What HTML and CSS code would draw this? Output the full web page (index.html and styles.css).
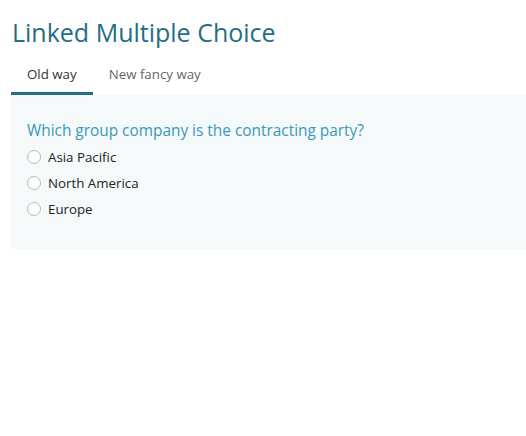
FILE: index.html
```html
<!DOCTYPE html>
<html>
<head>
<meta charset="utf-8">
<link rel="stylesheet" href="styles.css">
</head>
<body>
<div class="page">
  <h1 class="title">Linked Multiple Choice</h1>
  <div class="tabs">
    <div class="tab active">Old way</div>
    <div class="tab">New fancy way</div>
  </div>
  <div class="panel">
    <div class="question">Which group company is the contracting party?</div>
    <label class="option"><span class="radio"></span><span class="label">Asia Pacific</span></label>
    <label class="option"><span class="radio"></span><span class="label">North America</span></label>
    <label class="option"><span class="radio"></span><span class="label">Europe</span></label>
  </div>
</div>
</body>
</html>
```

FILE: styles.css
```css
html, body {
  margin: 0;
  padding: 0;
  background: #ffffff;
}
body {
  font-family: "Open Sans", "Noto Sans", sans-serif;
}
.page {
  padding-left: 11px;
}
.title {
  margin: 0;
  padding-top: 14px;
  padding-left: 1px;
  font-size: 25px;
  font-weight: 400;
  line-height: 36px;
  color: #236e85;
}
.tabs {
  display: flex;
  margin-top: 10px;
}
.tab {
  padding: 0 16px;
  height: 35px;
  line-height: 28px;
  font-size: 13.3px;
  color: #666666;
  box-sizing: border-box;
}
.tab.active {
  color: #333333;
  border-bottom: 3px solid #236e85;
}
.panel {
  background: #f5f9fa;
  border-bottom-left-radius: 3px;
  padding: 25px 16px 27px 16px;
}
.question {
  font-size: 15.4px;
  line-height: 22px;
  color: #3a98bb;
  margin-bottom: 2px;
}
.option {
  display: flex;
  align-items: center;
  height: 26px;
}
.radio {
  width: 12px;
  height: 12px;
  border: 1px solid #b8b8b8;
  border-radius: 50%;
  background: #ffffff;
  margin-right: 7px;
}
.label {
  font-size: 13.3px;
  color: #222222;
}
```
